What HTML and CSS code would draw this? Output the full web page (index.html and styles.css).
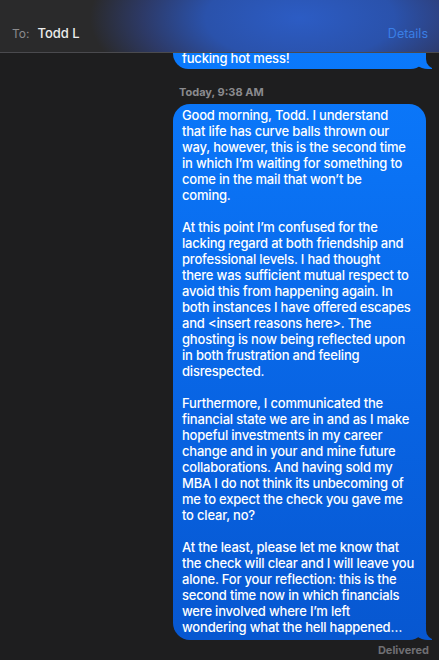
FILE: index.html
```html
<!DOCTYPE html>
<html lang="en">
<head>
<meta charset="utf-8">
<title>Messages – Todd L</title>
<link rel="stylesheet" href="styles.css">
</head>
<body>
<div class="window">
  <header class="header">
    <div class="recipient">
      <span class="to-label">To:</span>
      <span class="to-name">Todd L</span>
    </div>
    <span class="details">Details</span>
  </header>
  <main class="thread">
    <div class="bubble bubble-prev">fucking hot mess!</div>
    <div class="stamp-row"><span class="stamp">Today, 9:38 AM</span></div>
    <div class="bubble bubble-main">Good morning, Todd. I understand<br>that life has curve balls thrown our<br>way, however, this is the second time<br>in which I’m waiting for something to<br>come in the mail that won’t be<br>coming.<br><br>At this point I’m confused for the<br>lacking regard at both friendship and<br>professional levels. I had thought<br>there was sufficient mutual respect to<br>avoid this from happening again. In<br>both instances I have offered escapes<br>and &lt;insert reasons here&gt;. The<br>ghosting is now being reflected upon<br>in both frustration and feeling<br>disrespected.<br><br>Furthermore, I communicated the<br>financial state we are in and as I make<br>hopeful investments in my career<br>change and in your and mine future<br>collaborations. And having sold my<br>MBA I do not think its unbecoming of<br>me to expect the check you gave me<br>to clear, no?<br><br>At the least, please let me know that<br>the check will clear and I will leave you<br>alone. For your reflection: this is the<br>second time now in which financials<br>were involved where I’m left<br>wondering what the hell happened…</div>
    <div class="status">Delivered</div>
  </main>
</div>
</body>
</html>
```

FILE: styles.css
```css
html, body {
  margin: 0;
  padding: 0;
  background: #1e1e1f;
}

.window {
  width: 439px;
  height: 660px;
  overflow: hidden;
  display: flex;
  flex-direction: column;
  font-family: Inter, "Noto Sans", "Liberation Sans", sans-serif;
  -webkit-font-smoothing: antialiased;
}

.header {
  position: relative;
  z-index: 2;
  height: 53px;
  flex: 0 0 auto;
  box-sizing: border-box;
  border-bottom: 1px solid #4a4a4e;
  display: flex;
  align-items: flex-end;
  justify-content: space-between;
  padding: 0 11px 11px 12px;
  background:
    radial-gradient(ellipse 210px 95px at 300px 18px, rgba(44, 92, 196, 1) 0%, rgba(42, 84, 178, 0.95) 45%, rgba(46, 64, 128, 0.7) 75%, rgba(43, 43, 45, 0) 100%),
    radial-gradient(ellipse 90px 70px at 450px 10px, rgba(48, 58, 112, 0.9) 0%, rgba(48, 58, 112, 0) 100%),
    #2a2a2b;
}

.recipient {
  display: flex;
  align-items: baseline;
  gap: 8px;
}

.to-label {
  font-size: 12px;
  color: #8b8b8d;
}

.to-name {
  font-size: 13px;
  font-weight: 500;
  color: #ececec;
}

.details {
  font-size: 12.5px;
  color: #3a7fe6;
}

.thread {
  flex: 1 1 auto;
  display: flex;
  flex-direction: column;
  align-items: flex-end;
  padding-right: 13px;
  position: relative;
  z-index: 1;
}

.bubble {
  position: relative;
  width: 253px;
  box-sizing: border-box;
  padding: 3px 9px 5px 9px;
  border-radius: 17px;
  font-size: 13px;
  font-weight: 500;
  line-height: 16px;
  letter-spacing: -0.2px;
  color: #ffffff;
  white-space: nowrap;
  background: linear-gradient(180deg, #0b7cff 0px, #0a72f4 180px, #0863e2 420px, #0756cf 660px);
  background-attachment: fixed;
}

.bubble::before {
  content: "";
  position: absolute;
  right: -6px;
  bottom: 0;
  width: 20px;
  height: 16px;
  border-bottom-left-radius: 16px 14px;
  background: linear-gradient(180deg, #0b7cff 0px, #0a72f4 180px, #0863e2 420px, #0756cf 660px);
  background-attachment: fixed;
  z-index: -1;
}

.bubble::after {
  content: "";
  position: absolute;
  right: -26px;
  bottom: 0;
  width: 26px;
  height: 16px;
  border-bottom-left-radius: 10px;
  background: #1e1e1f;
  z-index: -1;
}

.bubble-prev {
  margin-top: -15px;
  padding-top: 12px;
  padding-bottom: 3px;
}

.stamp-row {
  width: 253px;
  box-sizing: border-box;
  padding-left: 6px;
  margin-top: 11px;
}

.stamp {
  font-size: 11px;
  line-height: 14px;
  font-weight: 700;
  color: #8a8a8e;
}

.bubble-main {
  margin-top: 4px;
}

.status {
  margin-top: 3px;
  margin-right: -3px;
  font-size: 11px;
  line-height: 14px;
  font-weight: 700;
  color: #6f6f73;
}
```
